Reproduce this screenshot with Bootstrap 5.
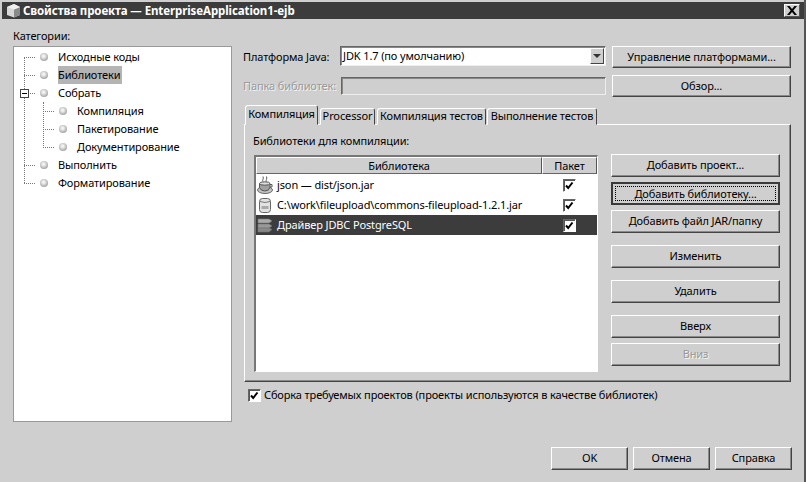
<!DOCTYPE html>
<html lang="ru"><head><meta charset="utf-8"><title>Свойства проекта</title>
<link href="https://cdn.jsdelivr.net/npm/bootstrap@5.3.0/dist/css/bootstrap.min.css" rel="stylesheet">
<style>
html,body{width:806px;height:482px;overflow:hidden}
body{background:#cfcfcf;color:#000;font:11px/14px "Noto Sans",sans-serif;letter-spacing:-.12px}
.dlg{width:806px;height:482px;border-right:2px solid #555;background:#cfcfcf;padding-top:2px}
.tbar{height:17px;margin-left:2px;width:802px;background:#3c3c3c;color:#fff;font-weight:700;font-size:11.5px;padding-left:4px;gap:2px;letter-spacing:-.1px}
.xbtn{width:16px;height:13px;background:#cfcfcf;border:1px solid;border-color:#fff #555 #555 #fff;margin-left:auto;margin-right:4px}
.body-area{padding-left:13px;height:463px}
.left-col{width:219px;flex:none}
.cat{height:14px;margin-top:10px}
.tree{margin-top:3px;height:376px;background:#fff;border:1px solid #999;padding-top:1px;position:relative}
.titem{height:18px;padding-left:10px;white-space:nowrap}
.titem.sub{padding-left:29px}
.dot{width:8px;height:8px;border-radius:50%;background:radial-gradient(circle at 45% 40%,#f2f2f2 15%,#a8a8a8 70%,#808080);margin-left:5px;margin-right:10px;flex:none}
.dots{position:absolute;border-left:1px dotted #777;width:0}
.dots-a{left:10px;top:10px;height:126px}
.dots-b{left:29px;top:55px;height:46px}
.dash{width:11px;border-top:1px dotted #777;flex:none}
.sel{background:#b4b4b4;padding-right:2px;line-height:18px;height:18px}
.minus{position:absolute;left:6px;top:42px;width:9px;height:9px;border:1px solid #444;background:#fff;z-index:1}
.minus::after{content:"";position:absolute;left:1px;right:1px;top:3px;height:1px;background:#000}
.right-col{width:550px;margin-left:11px;flex:none;padding-bottom:12px}
.btn-w{height:23px;background:#cfcfcf;border:1px solid;border-color:#fff #444 #444 #fff;box-shadow:inset -1px -1px 0 #8a8a8a;color:#000;font:inherit;letter-spacing:inherit;padding:0 0 1px;display:flex;align-items:center;justify-content:center;border-radius:0}
.btn-w.dis{color:#9a9a9a;text-shadow:1px 1px 0 #f4f4f4}
.btn-foc{border:2px solid #3a3a3a;padding:2px;box-shadow:none}
.btn-foc span{display:flex;align-items:center;justify-content:center;height:100%;width:100%;border:1px dotted #000}
.top-row{height:22px}
.row-a{margin-top:27px}
.row-b{margin-top:7px}
.lbl{width:97px;flex:none;white-space:nowrap;margin-top:4px}
.lbl.dis{color:#9a9a9a;text-shadow:1px 1px 0 #f4f4f4}
.field{width:266px;height:20px;border:1px solid;border-color:#666 #eee #eee #666;background:#fff;padding-left:2px;flex:none;box-shadow:inset 1px 1px 0 #888;white-space:nowrap}
.field.off{background:#cfcfcf;height:18px;margin-top:2px;margin-left:1px;width:265px}
.arrowb{margin-left:auto;width:14px;height:16px;margin-right:1px;background:#cfcfcf;border:1px solid;border-color:#fff #444 #444 #fff}
.arrowb::after{content:"";border:4px solid transparent;border-top:4px solid #333;border-bottom:0;margin:5px auto 0;display:block;width:0}
.wbtn{width:179px;margin-left:6px;height:22px}
.tabs-row{height:20px;margin-top:8px;padding-left:2px;align-items:flex-end;position:relative;z-index:1}
.tabb{height:17px;border:1px solid;border-color:#fff #444 #cfcfcf #fff;border-radius:3px 3px 0 0;line-height:13px;text-align:center;white-space:nowrap;background:#cfcfcf}
.t1{height:20px;width:73px;margin-right:2px;line-height:16px}
.t2{width:55px;margin-right:2px}
.t3{width:109px;margin-right:1px}
.t4{width:110px}
.tabpane{width:547px;height:258px;margin-left:1px;border:1px solid;border-color:#fff #444 #444 #fff;box-shadow:inset -1px -1px 0 #8a8a8a;margin-top:-1px;padding:9px 0 0 8px}
.tbl{width:344px;height:217px;margin:7px 0 0 1px;background:#fff;border:solid;border-color:#777 #fff #fff #777;border-width:2px 1px 1px 2px;overflow:hidden}
.thd{height:17px;text-align:center;background:#cfcfcf;border:1px solid;border-color:#fff #555 #666 #fff;line-height:15px}
.th1{width:286px}.th2{width:55px}
.thead-gap{margin-bottom:1px}
.tr{height:20px;padding-left:1px;white-space:nowrap}
.tr.on{background:#3c3c3c;color:#fff}
.trn{width:285px;gap:4px;flex:none}
.ck{width:13px;height:13px;background:#fff;border:1px solid;border-color:#666 #fff #fff #666;box-shadow:inset 1px 1px 0 #555;margin-left:21px;flex:none;display:block}
.ck svg{display:block}
.cb{margin:1px 0 0}
.side{width:169px;margin-left:13px;padding-top:20px;gap:5px}
.side .btn-w{width:100%}
.side .sp{margin-top:7px}
.cb-row{margin:6px 0 0 5px;gap:3px;white-space:nowrap}
.foot-row{margin-top:auto;margin-right:1px;gap:5px;justify-content:flex-end}
.foot-row .btn-w{width:77px}
</style></head><body>
<div class="dlg">
<div class="tbar d-flex align-items-center">
<svg width="15" height="15" viewBox="0 0 15 15"><path d="M1 4 8 1l6 3v8l-6 2.500L1 12z" fill="#d8d8d8"/><path d="M8 6.500 14 4v8l-6 2.500z" fill="#8a8a8a"/><path d="M1 4 8 1l6 3-6 2.500z" fill="#f0f0f0"/></svg>
<span>Свойства проекта — EnterpriseApplication1-ejb</span>
<div class="xbtn d-flex align-items-center justify-content-center"><svg width="10" height="9" viewBox="0 0 10 9"><path d="M0 0h2.500L5 3l2.500-3H10L6.300 4.500 10 9H7.500L5 6 2.500 9H0l3.700-4.500z" fill="#000"/></svg></div>
</div>
<div class="body-area d-flex">
<div class="left-col">
<div class="cat">Категории:</div>
<div class="tree">
<i class="dots dots-a"></i>
<i class="dots dots-b"></i>
<div class="minus"></div>
<div class="titem d-flex align-items-center"><i class="dash"></i><i class="dot"></i>Исходные коды</div>
<div class="titem d-flex align-items-center"><i class="dash"></i><i class="dot"></i><span class="sel">Библиотеки</span></div>
<div class="titem d-flex align-items-center"><i class="dash"></i><i class="dot"></i>Собрать</div>
<div class="titem sub d-flex align-items-center"><i class="dash"></i><i class="dot"></i>Компиляция</div>
<div class="titem sub d-flex align-items-center"><i class="dash"></i><i class="dot"></i>Пакетирование</div>
<div class="titem sub d-flex align-items-center"><i class="dash"></i><i class="dot"></i>Документирование</div>
<div class="titem d-flex align-items-center"><i class="dash"></i><i class="dot"></i>Выполнить</div>
<div class="titem d-flex align-items-center"><i class="dash"></i><i class="dot"></i>Форматирование</div>
</div>
</div>
<div class="right-col d-flex flex-column">
<div class="d-flex top-row row-a"><span class="lbl">Платформа Java:</span><div class="field d-flex align-items-center">JDK 1.7 (по умолчанию)<i class="arrowb"></i></div><button class="btn-w wbtn" type="button">Управление платформами...</button></div>
<div class="d-flex top-row row-b"><span class="lbl dis">Папка библиотек:</span><div class="field off"></div><button class="btn-w wbtn" type="button">Обзор...</button></div>
<div class="d-flex tabs-row"><div class="tabb t1">Компиляция</div><div class="tabb t2">Processor</div><div class="tabb t3">Компиляция тестов</div><div class="tabb t4">Выполнение тестов</div></div>
<div class="tabpane d-flex">
<div>
<div>Библиотеки для компиляции:</div>
<div class="tbl">
<div class="d-flex thead-gap"><div class="thd th1">Библиотека</div><div class="thd th2">Пакет</div></div>
<div class="tr d-flex align-items-center"><div class="trn d-flex align-items-center"><svg width="16" height="18" viewBox="0 0 16 18"><ellipse cx="8" cy="14" rx="7.500" ry="3.500" fill="#c4c4c4" stroke="#666"/><path d="M2.500 7.500h10.500v4q-1 3.500-5.200 3.500t-5.300-3.500z" fill="#a0a0a0" stroke="#555"/><ellipse cx="7.800" cy="7.500" rx="5.200" ry="1.700" fill="#ddd" stroke="#555"/><path d="M13 8.500h2v2.500h-2.200" fill="none" stroke="#555"/><path d="M6 5.500c-1.300-1.500 1.200-2.500 0-5M9.500 5.500c-1.300-1.500 1.200-2.500 0-5" stroke="#555" fill="none"/></svg><span>json — dist/json.jar</span></div><i class="ck"><svg width="11" height="11" viewBox="0 0 11 11"><path d="M2 5.500l2.200 2.500 4.300-5.500" stroke="#000" stroke-width="2" fill="none"/></svg></i></div>
<div class="tr d-flex align-items-center"><div class="trn d-flex align-items-center"><svg width="16" height="17" viewBox="0 0 16 17"><rect x="2.500" y="1.500" width="11" height="14" rx="3" fill="#e2e2e2" stroke="#666"/><path d="M3 4.500q5 2 10 0" fill="none" stroke="#777"/><rect x="4.500" y="9" width="7" height="3" fill="#aaa"/></svg><span>C:\work\fileupload\commons-fileupload-1.2.1.jar</span></div><i class="ck"><svg width="11" height="11" viewBox="0 0 11 11"><path d="M2 5.500l2.200 2.500 4.300-5.500" stroke="#000" stroke-width="2" fill="none"/></svg></i></div>
<div class="tr on d-flex align-items-center"><div class="trn d-flex align-items-center"><svg width="16" height="16" viewBox="0 0 16 16"><path d="M1 2h11l3 2-3 2H1z" fill="#aaa" stroke="#777" stroke-width=".6"/><path d="M1 7h11l3 2-3 2H1z" fill="#999" stroke="#777" stroke-width=".6"/><path d="M1 11h11l3 1.500L12 15H1z" fill="#888" stroke="#777" stroke-width=".6"/></svg><span>Драйвер JDBC PostgreSQL</span></div><i class="ck"><svg width="11" height="11" viewBox="0 0 11 11"><path d="M2 5.500l2.200 2.500 4.300-5.500" stroke="#000" stroke-width="2" fill="none"/></svg></i></div>
</div>
</div>
<div class="side d-flex flex-column">
<button class="btn-w" type="button">Добавить проект...</button>
<button class="btn-w btn-foc" type="button"><span>Добавить библиотеку...</span></button>
<button class="btn-w" type="button">Добавить файл JAR/папку</button>
<button class="btn-w sp" type="button">Изменить</button>
<button class="btn-w sp" type="button">Удалить</button>
<button class="btn-w sp" type="button">Вверх</button>
<button class="btn-w dis" type="button">Вниз</button>
</div>
</div>
<div class="d-flex align-items-start cb-row"><i class="ck cb"><svg width="11" height="11" viewBox="0 0 11 11"><path d="M2 5.500l2.200 2.500 4.300-5.500" stroke="#000" stroke-width="2" fill="none"/></svg></i><span>Сборка требуемых проектов (проекты используются в качестве библиотек)</span></div>
<div class="foot-row d-flex"><button class="btn-w" type="button">OK</button><button class="btn-w" type="button">Отмена</button><button class="btn-w" type="button">Справка</button></div>
</div>
</div>
</div>
</body></html>
